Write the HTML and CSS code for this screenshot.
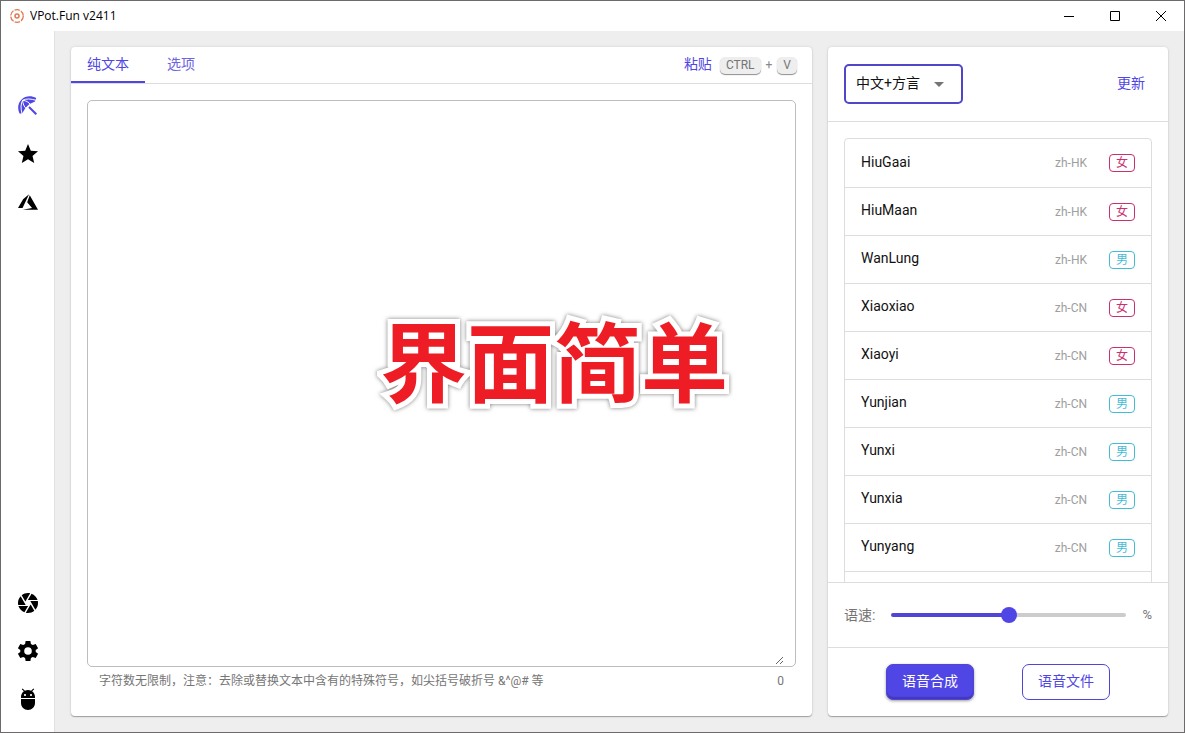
FILE: index.html
```html
<!DOCTYPE html>
<html lang="zh-CN">
<head>
<meta charset="utf-8">
<title>VPot.Fun v2411</title>
<link rel="stylesheet" href="styles.css">
</head>
<body>
<div class="window">
  <header class="titlebar">
    <svg class="app-icon" viewBox="0 0 16 16" fill="none" stroke="#e2784f"><circle cx="8" cy="8" r="6.3" stroke-width="1.3" stroke-dasharray="5.4 1.2"/><circle cx="8" cy="8" r="2" stroke-width="1.5"/></svg>
    <h1 class="app-title">VPot.Fun v2411</h1>
    <div class="window-controls">
      <button class="window-button" aria-label="Minimize"><svg viewBox="0 0 12 12" stroke="#000" fill="none"><path d="M1 6.5h10"/></svg></button>
      <button class="window-button" aria-label="Maximize"><svg viewBox="0 0 12 12" stroke="#000" fill="none"><path d="M1.500 1.500h9v9h-9z"/></svg></button>
      <button class="window-button" aria-label="Close"><svg viewBox="0 0 12 12" stroke="#000" fill="none"><path d="M1 1l10 10M11 1L1 11"/></svg></button>
    </div>
  </header>
  <div class="body">
    <nav class="sidebar">
      <div class="nav-group">
        <button class="nav-button active" aria-label="语音"><svg viewBox="0 0 24 24"><path d="M12.300 13.700l1.400-1.400 7.300 7.300-1.400 1.400z"/><path d="M3.800 19.800C1.200 14.500 1.800 9 5.600 5.400 9.400 1.700 15 1.200 20.200 3.900L19 7.400 13.200 10.300 9.600 13.800 6.400 19z"/><path class="rib" d="M6 19.500C4.600 14.500 4.700 9.300 6.700 6.300M6.700 6.300C9.800 4.500 15 4.600 20 6.300M6.700 6.300C6.700 9.700 8.200 12.700 10.200 14.700M6.700 6.300C10.200 6.600 12.700 8.200 14.700 10.800"/></svg></button>
        <button class="nav-button" aria-label="收藏"><svg viewBox="0 0 24 24"><path d="M12 17.270 18.180 21l-1.640-7.030L22 9.240l-7.190-.610L12 2 9.190 8.630 2 9.240l5.460 4.730L5.820 21z"/></svg></button>
        <button class="nav-button" aria-label="Azure"><svg viewBox="0 0 24 24"><path d="M13.050 4.240 6.560 18.050 2 18l5.090-8.760zM13.750 5.330 22 19.760H6.740l9.300-1.660-4.870-5.790z"/></svg></button>
      </div>
      <div class="nav-group">
        <button class="nav-button" aria-label="快照"><svg viewBox="0 0 24 24"><path d="M9.400 10.500l4.770-8.260C13.470 2.090 12.750 2 12 2c-2.400 0-4.600.850-6.320 2.250l3.660 6.350.060-.100zM21.540 9c-.920-2.920-3.150-5.260-6-6.340L11.880 9h9.660zm.260 1h-7.490l.290.500 4.760 8.250C21 16.970 22 14.610 22 12c0-.690-.070-1.350-.200-2zM8.540 12l-3.900-6.750C3.010 7.030 2 9.390 2 12c0 .690.070 1.350.200 2h7.490l-1.150-2zm-6.080 3c.920 2.920 3.150 5.260 6 6.340L12.120 15H2.460zm11.270 0l-3.900 6.760c.700.150 1.420.240 2.170.240 2.400 0 4.600-.850 6.320-2.250l-3.660-6.350-.930 1.600z"/></svg></button>
        <button class="nav-button" aria-label="设置"><svg viewBox="0 0 24 24"><path d="M9.600 2h4.800l.500 3 1.900 1.100 2.900-1.100 2.400 4.200-2.400 1.900v1.800l2.400 1.900-2.400 4.200-2.900-1.100-1.900 1.100-.500 3H9.600l-.500-3-1.900-1.100L4.300 19l-2.400-4.200 2.400-1.900v-1.800L1.900 9.200 4.300 5l2.900 1.100L9.100 5zM12 8.200a3.800 3.800 0 1 0 0 7.600 3.800 3.800 0 0 0 0-7.600z" fill-rule="evenodd"/></svg></button>
        <button class="nav-button" aria-label="Android"><svg viewBox="0 0 24 24"><path d="M5 16c0 3.870 3.130 7 7 7s7-3.130 7-7v-4H5v4zM16.120 4.370l2.100-2.100-.820-.830-2.300 2.310C14.160 3.280 13.120 3 12 3s-2.160.280-3.090.750L6.600 1.440l-.820.830 2.100 2.100C6.140 5.640 5 7.680 5 10v1h14v-1c0-2.320-1.140-4.360-2.880-5.630zM9 9c-.550 0-1-.450-1-1s.450-1 1-1 1 .450 1 1-.450 1-1 1zm6 0c-.550 0-1-.450-1-1s.450-1 1-1 1 .450 1 1-.450 1-1 1z"/></svg></button>
      </div>
    </nav>
    <main class="content">
      <section class="card editor">
        <div class="tabs">
          <button class="tab selected">纯文本</button>
          <button class="tab">选项</button>
          <div class="paste">
            <button class="link-button">粘贴</button>
            <kbd class="key">CTRL</kbd><span>+</span><kbd class="key">V</kbd>
          </div>
        </div>
        <div class="editor-body">
          <div class="text-frame"><textarea class="text-input" aria-label="文本"></textarea></div>
          <div class="hint"><span>字符数无限制，注意：去除或替换文本中含有的特殊符号，如尖括号破折号 &amp;^@# 等</span><span>0</span></div>
        </div>
      </section>
      <aside class="card voices">
        <div class="voices-header">
          <div class="select-wrap">
            <select class="select" aria-label="语言"><option>中文+方言</option></select>
            <svg class="select-arrow" viewBox="0 0 10 5"><path d="M0 0h10L5 5z" fill="#757575"/></svg>
          </div>
          <button class="link-button">更新</button>
        </div>
        <div class="voice-scroll">
          <ul class="voice-list">
            <li class="voice"><span class="name">HiuGaai</span><span class="locale">zh-HK</span><span class="chip female">女</span></li>
            <li class="voice"><span class="name">HiuMaan</span><span class="locale">zh-HK</span><span class="chip female">女</span></li>
            <li class="voice"><span class="name">WanLung</span><span class="locale">zh-HK</span><span class="chip male">男</span></li>
            <li class="voice"><span class="name">Xiaoxiao</span><span class="locale">zh-CN</span><span class="chip female">女</span></li>
            <li class="voice"><span class="name">Xiaoyi</span><span class="locale">zh-CN</span><span class="chip female">女</span></li>
            <li class="voice"><span class="name">Yunjian</span><span class="locale">zh-CN</span><span class="chip male">男</span></li>
            <li class="voice"><span class="name">Yunxi</span><span class="locale">zh-CN</span><span class="chip male">男</span></li>
            <li class="voice"><span class="name">Yunxia</span><span class="locale">zh-CN</span><span class="chip male">男</span></li>
            <li class="voice"><span class="name">Yunyang</span><span class="locale">zh-CN</span><span class="chip male">男</span></li>
            <li class="voice"></li>
          </ul>
        </div>
        <div class="speed">
          <label for="speed">语速:</label>
          <input class="slider" id="speed" type="range" min="-100" max="100" value="0">
          <span class="unit">%</span>
        </div>
        <div class="actions">
          <button class="action primary">语音合成</button>
          <button class="action outlined">语音文件</button>
        </div>
      </aside>
    </main>
  </div>
  <div class="caption">界面简单</div>
</div>
</body>
</html>
```
FILE: styles.css
```css
* { box-sizing: border-box; }
body {
  margin: 0;
  font-family: Roboto, "Noto Sans CJK SC", sans-serif;
  font-size: 14px;
  line-height: 20px;
  color: #111;
}
button, select, textarea { font: inherit; }
button { border: 0; background: none; padding: 0; }
svg { display: block; }

.window {
  position: relative;
  display: flex;
  flex-direction: column;
  height: 100vh;
  border: 1px solid #6c6a6a;
  background: #fff;
}
.titlebar { display: flex; align-items: center; height: 30px; padding-left: 8px; }
.app-icon { width: 16px; height: 16px; }
.app-title { margin: 0 0 0 5px; font: 12px/16px "Open Sans", sans-serif; color: #000; }
.window-controls { display: flex; margin-left: auto; }
.window-button { display: grid; place-items: center; width: 46px; height: 30px; }
.window-button svg { width: 12px; height: 12px; }

.body { display: flex; flex: 1; min-height: 0; }
.sidebar {
  display: flex;
  flex-direction: column;
  justify-content: space-between;
  width: 54px;
  padding: 51px 0 9px;
  border-right: 1px solid #e0e0e0;
}
.nav-button { display: grid; place-items: center; width: 100%; height: 48px; }
.nav-button svg { width: 24px; height: 24px; fill: #000; }
.nav-button.active svg { fill: #4f46e5; }
.nav-button .rib { fill: none; stroke: #fff; stroke-width: 1; }

.content {
  display: flex;
  flex: 1;
  gap: 16px;
  min-width: 0;
  padding: 16px;
  background: #eee;
}
.card {
  display: flex;
  flex-direction: column;
  min-width: 0;
  border-radius: 4px;
  background: #fff;
  box-shadow: 0 1px 1px rgba(0, 0, 0, .3), 0 0 3px rgba(0, 0, 0, .12);
}
.editor { flex: 1; }
.voices { flex: 0 0 340px; }

.tabs { display: flex; border-bottom: 1px solid #ddd; }
.tab { height: 36px; padding: 0 16px; color: #6d65e0; border-bottom: 2px solid transparent; }
.tab + .tab { margin-left: 6px; }
.tab.selected { color: #4f46e5; border-color: #4f46e5; }
.paste { display: flex; align-items: center; gap: 5px; margin-left: auto; padding-right: 15px; color: #888; font-size: 12px; }
.link-button { padding-bottom: 2px; color: #4f46e5; font-size: 14px; }
.paste .link-button { margin-right: 3px; }
.key {
  padding: 0 6px;
  border-radius: 5px;
  background: #eee;
  color: #757575;
  font: 12px/17px Roboto, sans-serif;
  box-shadow: 0 1px 1px rgba(0, 0, 0, .45);
}

.editor-body { display: flex; flex: 1; flex-direction: column; padding: 16px 16px 25px; }
.text-frame { display: flex; flex: 1; padding: 0 11px 1px; border: 1px solid #bdbdbd; border-radius: 5px; }
.text-input { flex: 1; padding: 12px 0; border: 0; outline: 0; background: none; }
.hint { display: flex; justify-content: space-between; padding: 4px 12px 0; font-size: 12px; color: #757575; }

.voices-header {
  display: flex;
  align-items: center;
  justify-content: space-between;
  padding: 17px 23px 17px 16px;
  border-bottom: 1px solid #ddd;
}
.select-wrap { position: relative; width: 119px; }
.select {
  width: 100%;
  height: 40px;
  padding: 0 32px 2px 10px;
  border: 2px solid #4f46c8;
  border-radius: 5px;
  background: #fff;
  color: #111;
  appearance: none;
}
.select-arrow { position: absolute; top: 18px; right: 19px; width: 10px; height: 5px; pointer-events: none; }

.voice-scroll { flex: 1 1 0; min-height: 0; padding: 16px; padding-bottom: 0; overflow: auto; scrollbar-width: none; }
.voice-list { margin: 0; padding: 0; list-style: none; border: 1px solid #ddd; border-radius: 4px; }
.voice { display: flex; align-items: center; height: 48px; padding: 0 16px; }
.voice:first-child { height: 49px; }
.voice:not(:last-child) { border-bottom: 1px solid #ddd; }
.name { flex: 1; padding-bottom: 3px; }
.locale { margin-right: 22px; font-size: 12px; color: #9e9e9e; }
.chip {
  width: 26px;
  height: 18px;
  border: 1px solid;
  border-radius: 4px;
  font-size: 12px;
  line-height: 16px;
  text-align: center;
}
.female { color: #c9306f; }
.male { color: #45bcd5; }

.speed {
  display: flex;
  align-items: center;
  gap: 16px;
  height: 65px;
  padding: 0 16px;
  border-top: 1px solid #ddd;
  color: #757575;
}
.unit { font-size: 13px; }
.slider { flex: 1; min-width: 0; height: 16px; margin: 0; background: none; appearance: none; }
.slider::-webkit-slider-runnable-track {
  height: 4px;
  border-radius: 2px;
  background: linear-gradient(to right, #4f46d8 50%, #ccc 50%);
}
.slider::-webkit-slider-thumb {
  width: 16px;
  height: 16px;
  margin-top: -6px;
  border-radius: 50%;
  background: #4f46e5;
  appearance: none;
}
.actions {
  display: flex;
  justify-content: center;
  gap: 48px;
  padding: 16px;
  border-top: 1px solid #ddd;
}
.action { height: 36px; padding: 0 15px 2px; border: 1px solid #4f46d8; border-radius: 7px; }
.primary { background: #4f46e5; color: #fff; box-shadow: inset 0 -2px 1px #4338b8, 0 1px 3px rgba(0, 0, 0, .4); }
.outlined { color: #4f46e5; }

.caption {
  position: absolute;
  top: 293px;
  left: 379px;
  font: 700 87px/128px "Noto Sans CJK SC", sans-serif;
  color: #ee1c25;
  white-space: nowrap;
  -webkit-text-stroke: 10px #fff;
  paint-order: stroke fill;
  stroke-linejoin: round;
  filter: drop-shadow(0 0 2px rgba(0, 0, 0, .5));
  pointer-events: none;
}
```
